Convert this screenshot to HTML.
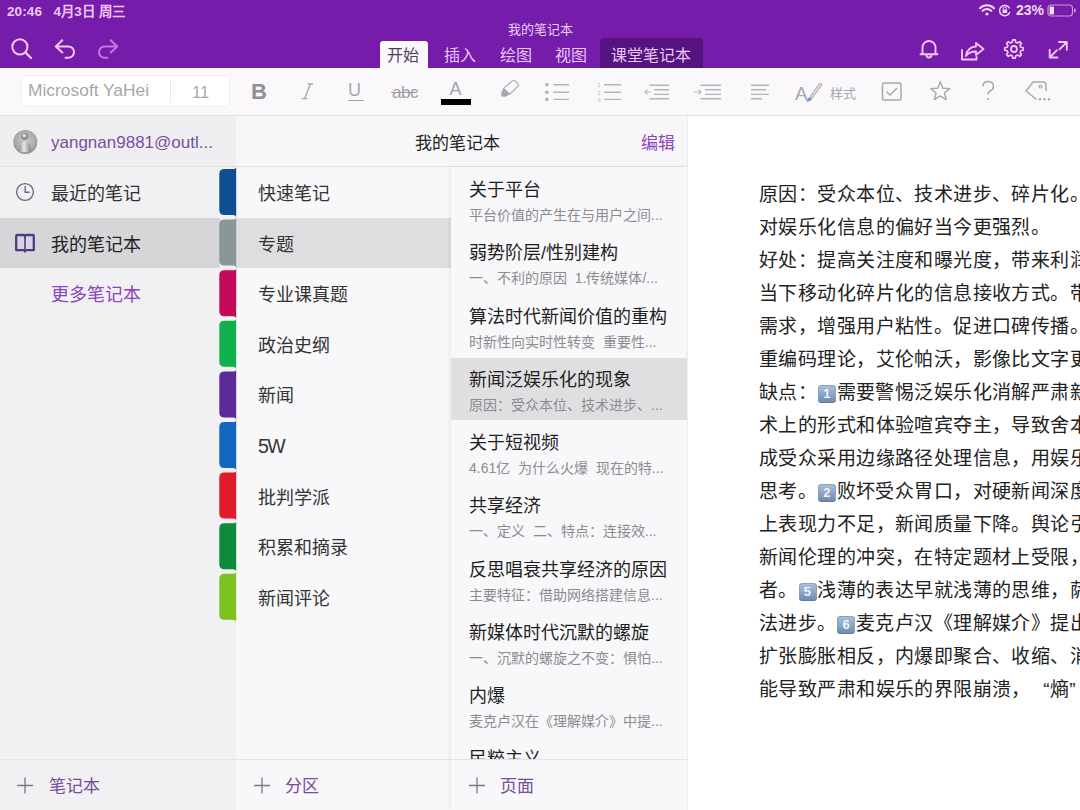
<!DOCTYPE html>
<html lang="zh-CN">
<head>
<meta charset="utf-8">
<style>
*{margin:0;padding:0;box-sizing:border-box}
html,body{width:1080px;height:810px;overflow:hidden;background:#fff}
body{position:relative;font-family:"Liberation Sans",sans-serif;color:#222}
.a{position:absolute;white-space:nowrap}
#top{position:absolute;left:0;top:0;width:1080px;height:68px;background:#761CAB}
#tb{position:absolute;left:0;top:68px;width:1080px;height:48px;background:#FAF8FB;border-bottom:1px solid #E2E0E4}
#nb{position:absolute;left:0;top:116px;width:236px;height:694px;background:#F1F0F3}
#sec{position:absolute;left:236px;top:116px;width:215px;height:694px;background:#F8F7FA}
#pg{position:absolute;left:451px;top:167px;width:236px;height:643px;background:#F8F7FA;box-shadow:-2px 0 4px rgba(0,0,0,0.06)}
#content{position:absolute;left:687px;top:116px;width:393px;height:694px;background:#fff;overflow:hidden;border-left:1px solid #EDECEF}
.hdr{position:absolute;top:116px;height:51px;border-bottom:1px solid #E4E3E6}
.ln{font-size:19px;letter-spacing:0.42px;color:#222;line-height:24px}
.kc{display:inline-block;width:18px;height:18px;vertical-align:1px;border-radius:4px;background:linear-gradient(#AFC3DA,#6A89AD);box-shadow:inset 0 -1px 0 #5D7C9F, inset 0 0 0 1px #87A2C2;color:#EEF4FA;font-size:13px;font-weight:bold;text-align:center;line-height:18px;margin:0 0.7px}
.q1{display:inline-block;width:1em;text-align:right}.q2{display:inline-block;width:1em;text-align:left}
</style>
</head>
<body>

<div id="top">
 <div class="a" style="left:7px;top:-0.5px;font-size:13.5px;font-weight:bold;color:#EEC8F5;letter-spacing:0.1px">20:46&nbsp;&nbsp;&nbsp;4月3日 周三</div>
 <svg class="a" style="left:978px;top:3px" width="18" height="13" viewBox="0 0 18 13"><path d="M2 5.2 A10 10 0 0 1 16 5.2" fill="none" stroke="#F2D6F6" stroke-width="2" stroke-linecap="round"/><path d="M4.6 7.9 A6.2 6.2 0 0 1 13.4 7.9" fill="none" stroke="#F2D6F6" stroke-width="2" stroke-linecap="round"/><circle cx="9" cy="11" r="1.6" fill="#F2D6F6"/></svg>
 <svg class="a" style="left:998px;top:4px" width="14" height="13" viewBox="0 0 14 13"><path d="M11.8 8 A5.2 5.2 0 1 1 11.6 4.6" fill="none" stroke="#F2D6F6" stroke-width="1.4"/><rect x="4.5" y="5.5" width="4.6" height="3.6" fill="#F2D6F6"/><path d="M5.3 5.6 V4.3 A1.5 1.5 0 0 1 8.3 4.3 V5.6" fill="none" stroke="#F2D6F6" stroke-width="1"/></svg>
 <div class="a" style="left:1016px;top:2px;font-size:14px;font-weight:bold;color:#F2D6F6">23%</div>
 <svg class="a" style="left:1047px;top:4px" width="30" height="13" viewBox="0 0 30 13"><rect x="1" y="1" width="24.5" height="11" rx="3" fill="none" stroke="#C79ADB" stroke-width="1.2"/><rect x="2.6" y="2.6" width="4.4" height="7.8" rx="1" fill="#F4E2F7"/><path d="M27 4.5 A2 2 0 0 1 27 8.5" fill="#C79ADB"/></svg>
 <div class="a" style="left:0;width:1080px;text-align:center;top:19px;font-size:13px;color:#EBCFF2">我的笔记本</div>
 <!-- left icons -->
 <svg class="a" style="left:8px;top:34px" width="28" height="28" viewBox="8 34 28 28"><circle cx="19.9" cy="46.8" r="7.6" fill="none" stroke="#F2C8F5" stroke-width="2"/><path d="M25.6 52.6 L31 58" stroke="#F2C8F5" stroke-width="2.2" stroke-linecap="round"/></svg>
 <svg class="a" style="left:50px;top:34px" width="30" height="28" viewBox="50 34 30 28"><path d="M62.3 40.3 L55.8 46.4 L62.3 52.5 M55.8 46.4 H68.3 A5.7 5.7 0 0 1 68.3 57.8 H65.5" fill="none" stroke="#F2C8F5" stroke-width="2" stroke-linecap="round" stroke-linejoin="round"/></svg>
 <svg class="a" style="left:92px;top:34px" width="30" height="28" viewBox="92 34 30 28"><path d="M110.7 40.3 L117.2 46.4 L110.7 52.5 M117.2 46.4 H104.7 A5.7 5.7 0 0 0 104.7 57.8 H107.5" fill="none" stroke="#C07ADB" stroke-width="2" stroke-linecap="round" stroke-linejoin="round"/></svg>
 <!-- tabs -->
 <div class="a" style="left:380px;top:41px;width:48px;height:27px;background:#FAF8FB;border-radius:3px 3px 0 0"></div>
 <div class="a" style="left:387px;top:41.5px;font-size:16px;color:#4F3D5E">开始</div>
 <div class="a" style="left:444px;top:41.5px;font-size:16px;color:#E9C6F4">插入</div>
 <div class="a" style="left:500px;top:41.5px;font-size:16px;color:#E9C6F4">绘图</div>
 <div class="a" style="left:555px;top:41.5px;font-size:16px;color:#E9C6F4">视图</div>
 <div class="a" style="left:600px;top:38px;width:103px;height:30px;background:#55137F;border-radius:4px 4px 0 0"></div>
 <div class="a" style="left:611px;top:41.5px;font-size:16px;color:#E9C6F4">课堂笔记本</div>
 <!-- right icons -->
 <svg class="a" style="left:914px;top:36px" width="30" height="26" viewBox="914 36 30 26"><path d="M922.5 54 V47.5 A6.5 6.5 0 0 1 935.5 47.5 V54 M920.5 54.2 H937.5 M926.5 55 A2.5 2.5 0 0 0 931.5 55" fill="none" stroke="#F2C8F5" stroke-width="1.9" stroke-linecap="round" stroke-linejoin="round"/></svg>
 <svg class="a" style="left:956px;top:36px" width="32" height="28" viewBox="956 36 32 28"><path d="M962 50 V59.5 H976.5 V57" fill="none" stroke="#F2C8F5" stroke-width="1.9" stroke-linecap="round" stroke-linejoin="round"/><path d="M966 56 C966.5 50 971 46.5 976 46.5 V43 L983.5 49 L976 55 V51.5 C971.5 51.5 968 53 966 56 Z" fill="none" stroke="#F2C8F5" stroke-width="1.8" stroke-linejoin="round"/></svg>
 <svg class="a" style="left:1002px;top:37px" width="24" height="24" viewBox="1002 37 24 24"><path d="M1023.22 47.76 L1023.22 50.24 L1020.77 50.79 L1020.05 52.52 L1021.39 54.64 L1019.64 56.39 L1017.52 55.05 L1015.79 55.77 L1015.24 58.22 L1012.76 58.22 L1012.21 55.77 L1010.48 55.05 L1008.36 56.39 L1006.61 54.64 L1007.95 52.52 L1007.23 50.79 L1004.78 50.24 L1004.78 47.76 L1007.23 47.21 L1007.95 45.48 L1006.61 43.36 L1008.36 41.61 L1010.48 42.95 L1012.21 42.23 L1012.76 39.78 L1015.24 39.78 L1015.79 42.23 L1017.52 42.95 L1019.64 41.61 L1021.39 43.36 L1020.05 45.48 L1020.77 47.21 Z" fill="none" stroke="#F2C8F5" stroke-width="1.7" stroke-linejoin="round"/><circle cx="1014" cy="49" r="3" fill="none" stroke="#F2C8F5" stroke-width="1.8"/></svg>
 <svg class="a" style="left:1044px;top:36px" width="28" height="26" viewBox="1044 36 28 26"><path d="M1059 42 H1066.8 V49.8 M1066.5 42.3 L1059.5 49.3 M1057.5 57.5 H1049.7 V49.7 M1050 57.2 L1057 50.2" fill="none" stroke="#F2C8F5" stroke-width="1.9" stroke-linecap="round" stroke-linejoin="round"/></svg>
</div>


<div id="tb">
 <div class="a" style="left:21px;top:7px;width:209px;height:32px;background:#fff;border:1px solid #EEEDF0;border-radius:5px"></div>
 <div class="a" style="left:170px;top:12px;width:1px;height:23px;background:#E9E8EB"></div>
 <div class="a" style="left:28px;top:12px;font-size:17.4px;color:#A8A6AA;letter-spacing:0px">Microsoft YaHei</div>
 <div class="a" style="left:192px;top:14.5px;font-size:16.5px;color:#A8A6AA">11</div>
 <div class="a" style="left:251px;top:11px;font-size:22px;font-weight:bold;color:#918F93">B</div>
 <svg class="a" style="left:298px;top:12px" width="20" height="24" viewBox="298 80 20 24"><path d="M310.6 83.8 L304.6 98.6 M307.6 83.8 H313 M301.8 98.6 H307.4" fill="none" stroke="#A3A1A5" stroke-width="1.3"/></svg>
 <div class="a" style="left:348px;top:11.5px;font-size:18px;color:#A8A6AA">U</div>
 <div class="a" style="left:348px;top:31.5px;width:16px;height:1.3px;background:#A8A6AA"></div>
 <div class="a" style="left:392px;top:14.5px;font-size:17px;color:#A09EA2;letter-spacing:-0.5px">abc</div>
 <div class="a" style="left:391px;top:24px;width:26px;height:1.3px;background:#A09EA2"></div>
 <div class="a" style="left:449.5px;top:11px;font-size:18px;color:#A3A1A5">A</div>
 <div class="a" style="left:441px;top:31px;width:30px;height:6px;background:#000"></div>
 <svg class="a" style="left:498px;top:10px" width="24" height="22" viewBox="498 78 24 22"><path d="M503.5 88.5 L512.5 80.8 Q514 79.8 515.2 81 L518 83.8 Q519 85 518 86.3 L509.8 94.2 Z" fill="none" stroke="#B5B3B7" stroke-width="1.3" stroke-linejoin="round"/><path d="M503.5 88.5 L509.8 94.2 L505.5 96.8 L501.5 96.5 L501.2 92.5 Z" fill="#A9A7AB"/></svg>
 <!-- bullets -->
 <svg class="a" style="left:540px;top:78px;" width="0" height="0"></svg>
 <svg class="a" style="left:0;top:0" width="1080" height="48" viewBox="0 68 1080 48">
  <g fill="#B3B1B5"><circle cx="546.8" cy="84.7" r="1.8"/><circle cx="546.8" cy="92.2" r="1.8"/><circle cx="546.8" cy="99.4" r="1.8"/></g>
  <g stroke="#B5B3B7" stroke-width="1.4"><path d="M553.5 84.7 H569 M553.5 92.2 H569 M553.5 99.4 H569"/>
  <path d="M604 84.7 H621 M604 92.2 H621 M604 99.4 H621"/>
  <path d="M649.5 85.2 H669 M654 89.7 H669 M654 94.4 H669 M649.5 98.8 H669"/>
  <path d="M700.5 85.2 H721 M705 89.7 H721 M705 94.4 H721 M700.5 98.8 H721"/>
  <path d="M751 85.2 H769 M751 89.7 H766 M751 94.4 H769 M751 98.8 H762"/>
  </g>
  <g fill="#B9B7BB" font-size="5.5" font-family="Liberation Sans"><text x="597.5" y="87">1</text><text x="597.5" y="94.5">2</text><text x="597.5" y="101.5">3</text></g>
  <path d="M651 92 H645 M647.5 89.5 L645 92 L647.5 94.5" fill="none" stroke="#BDBBBF" stroke-width="1.2"/>
  <path d="M694 92 H701 M698.5 89.5 L701 92 L698.5 94.5" fill="none" stroke="#BDBBBF" stroke-width="1.2"/>
  <text x="795" y="100" font-size="19" font-family="Liberation Sans" fill="#A9A7AB">A</text>
  <path d="M808 100 L819 84.5 Q821.5 82.5 821.8 84.5 L811.5 98.5 Z" fill="none" stroke="#A9A7AB" stroke-width="1.2"/>
  <path d="M806.5 101.5 Q808 97 810.5 97.5 L812 99 Q810 102 806.5 101.5 Z" fill="#6E9BD0"/>
  <rect x="882.5" y="83" width="18.5" height="17" rx="1.5" fill="none" stroke="#A9A7AB" stroke-width="1.5"/>
  <path d="M886.5 91.5 L890 95 L897 88" fill="none" stroke="#A9A7AB" stroke-width="1.5"/>
  <path d="M940.3 81.8 L942.9 88.2 L949.7 88.6 L944.5 93 L946.2 99.6 L940.3 95.9 L934.4 99.6 L936.1 93 L930.9 88.6 L937.7 88.2 Z" fill="none" stroke="#A9A7AB" stroke-width="1.4" stroke-linejoin="round"/>
  <path d="M983 86.5 Q983 81.5 988 81.5 Q993.5 81.5 993.5 86.5 Q993.5 89.5 990 91 Q988 92 988 94.5" fill="none" stroke="#A9A7AB" stroke-width="1.5"/>
  <circle cx="988" cy="99" r="1.1" fill="#A9A7AB"/>
  <path d="M1036.5 99.5 L1026 91 L1033 82 H1043 Q1046 82 1046 85 V91" fill="none" stroke="#A9A7AB" stroke-width="1.5" stroke-linejoin="round"/>
  <circle cx="1040.5" cy="86.5" r="1.5" fill="none" stroke="#A9A7AB" stroke-width="1.2"/>
  <g fill="#A9A7AB"><circle cx="1040" cy="99.3" r="1.2"/><circle cx="1044.5" cy="99.3" r="1.2"/><circle cx="1049" cy="99.3" r="1.2"/></g>
 </svg>
 <div class="a" style="left:830px;top:15px;font-size:13px;color:#A9A7AB">样式</div>
</div>


<div id="nb">
 <div class="a" style="left:0;top:0;width:236px;height:51px;background:#EFEEF1;border-bottom:1px solid #E2E1E4"></div>
 <svg class="a" style="left:12px;top:13px" width="27" height="27" viewBox="12 129 27 27"><defs><radialGradient id="av" cx="0.5" cy="0.45" r="0.55"><stop offset="0" stop-color="#C9CBCC"/><stop offset="0.7" stop-color="#ABADAE"/><stop offset="1" stop-color="#8F9192"/></radialGradient><linearGradient id="bd" x1="0" x2="1"><stop offset="0" stop-color="#8C8F90"/><stop offset="0.45" stop-color="#E6EAEB"/><stop offset="1" stop-color="#7E8182"/></linearGradient></defs><circle cx="25.3" cy="142" r="12" fill="url(#av)"/><circle cx="24.8" cy="136.5" r="3.6" fill="#8F9293"/><circle cx="24.2" cy="135.6" r="1.6" fill="#E8EAEA"/><path d="M18.5 152 Q18.5 142 24.8 141.5 Q31 142 31 152 Z" fill="url(#bd)"/></svg>
 <div class="a" style="left:51px;top:17px;font-size:17px;color:#7A4E9E">yangnan9881@outl...</div>
 <div class="a" style="left:0;top:102px;width:220px;height:50px;background:#D6D5D8"></div>
 <svg class="a" style="left:14px;top:66px" width="24" height="24" viewBox="14 182 24 24"><circle cx="25" cy="192" r="8.4" fill="none" stroke="#75608A" stroke-width="1.35"/><path d="M25.2 186 V192.2 H29.6" fill="none" stroke="#75608A" stroke-width="1.4"/></svg>
 <svg class="a" style="left:12px;top:114px" width="26" height="24" viewBox="12 230 26 24"><path d="M16.2 236 Q16.2 235 17.5 235 H23.5 Q25 235 25 236.5 Q25 235 26.5 235 H32.5 Q33.8 235 33.8 236 V250.2 H26.5 Q25 250.2 25 251.5 Q25 250.2 23.5 250.2 H16.2 Z" fill="#DAD3E6" stroke="#4E3D7C" stroke-width="2.3" stroke-linejoin="round"/><path d="M25 236.5 V251" stroke="#4E3D7C" stroke-width="1.6"/></svg>
 <div class="a" style="left:51px;top:62.7px;font-size:18px;color:#333">最近的笔记</div>
 <div class="a" style="left:51px;top:113.7px;font-size:18px;color:#222">我的笔记本</div>
 <div class="a" style="left:51px;top:163.7px;font-size:18px;color:#8E44C0">更多笔记本</div>
 <div class="a" style="left:0;top:643px;width:236px;height:51px;background:#F1F0F3;border-top:1px solid #E4E3E6"></div>
 <svg class="a" style="left:16px;top:660px" width="18" height="18" viewBox="0 0 18 18"><path d="M1 9.5 H17 M9 1.5 V17.5" stroke="#807389" stroke-width="1.3"/></svg>
 <div class="a" style="left:49px;top:655.5px;font-size:17px;color:#7B4A9A">笔记本</div>
</div>

<div id="sec">
 <div class="a" style="left:0;top:0;width:451px;height:51px;background:#F7F6F9;border-bottom:1px solid #E4E3E6"></div>
 <div class="a" style="left:179px;top:12.5px;font-size:17px;color:#222">我的笔记本</div>
 <div class="a" style="left:405px;top:12.5px;font-size:17px;color:#8E44C0">编辑</div>
 <div class="a" style="left:0;top:102px;width:215px;height:50px;background:#DEDDE0"></div>
 <div class="a" style="left:22px;top:63.0px;font-size:18px;color:#333">快速笔记</div>
 <div class="a" style="left:22px;top:113.6px;font-size:18px;color:#333">专题</div>
 <div class="a" style="left:22px;top:164.2px;font-size:18px;color:#333">专业课真题</div>
 <div class="a" style="left:22px;top:214.8px;font-size:18px;color:#333">政治史纲</div>
 <div class="a" style="left:22px;top:265.4px;font-size:18px;color:#333">新闻</div>
 <div class="a" style="left:22px;top:318.5px;font-size:19.5px;letter-spacing:-1.5px;color:#333">5W</div>
 <div class="a" style="left:22px;top:366.6px;font-size:18px;color:#333">批判学派</div>
 <div class="a" style="left:22px;top:417.2px;font-size:18px;color:#333">积累和摘录</div>
 <div class="a" style="left:22px;top:467.8px;font-size:18px;color:#333">新闻评论</div>
 <div class="a" style="left:0;top:643px;width:215px;height:51px;background:#F8F7FA;border-top:1px solid #E4E3E6"></div>
 <svg class="a" style="left:17px;top:660px" width="18" height="18" viewBox="0 0 18 18"><path d="M1 9.5 H17 M9 1.5 V17.5" stroke="#807389" stroke-width="1.3"/></svg>
 <div class="a" style="left:49px;top:655.5px;font-size:17px;color:#7B4A9A">分区</div>
</div>
<svg class="a" style="left:210px;top:160px" width="30" height="470" viewBox="210 160 30 470"><path d="M236.2 167.0 Q236 169.0 233 169.0 H224.5 Q219.3 169.0 219.3 174.0 V210.0 Q219.3 215.0 224.5 215.0 H233 Q236 215.0 236.2 217.5 Z" fill="#0F4E92"/><path d="M236.2 217.6 Q236 219.6 233 219.6 H224.5 Q219.3 219.6 219.3 224.6 V260.6 Q219.3 265.6 224.5 265.6 H233 Q236 265.6 236.2 268.1 Z" fill="#8A9799"/><path d="M236.2 268.2 Q236 270.2 233 270.2 H224.5 Q219.3 270.2 219.3 275.2 V311.2 Q219.3 316.2 224.5 316.2 H233 Q236 316.2 236.2 318.7 Z" fill="#C2095A"/><path d="M236.2 318.8 Q236 320.8 233 320.8 H224.5 Q219.3 320.8 219.3 325.8 V361.8 Q219.3 366.8 224.5 366.8 H233 Q236 366.8 236.2 369.3 Z" fill="#10B14D"/><path d="M236.2 369.4 Q236 371.4 233 371.4 H224.5 Q219.3 371.4 219.3 376.4 V412.4 Q219.3 417.4 224.5 417.4 H233 Q236 417.4 236.2 419.9 Z" fill="#5B2A99"/><path d="M236.2 420.0 Q236 422.0 233 422.0 H224.5 Q219.3 422.0 219.3 427.0 V463.0 Q219.3 468.0 224.5 468.0 H233 Q236 468.0 236.2 470.5 Z" fill="#1266BD"/><path d="M236.2 470.6 Q236 472.6 233 472.6 H224.5 Q219.3 472.6 219.3 477.6 V513.6 Q219.3 518.6 224.5 518.6 H233 Q236 518.6 236.2 521.1 Z" fill="#E01B2C"/><path d="M236.2 521.2 Q236 523.2 233 523.2 H224.5 Q219.3 523.2 219.3 528.2 V564.2 Q219.3 569.2 224.5 569.2 H233 Q236 569.2 236.2 571.7 Z" fill="#0E8A3C"/><path d="M236.2 571.8 Q236 573.8 233 573.8 H224.5 Q219.3 573.8 219.3 578.8 V614.8 Q219.3 619.8 224.5 619.8 H233 Q236 619.8 236.2 622.3 Z" fill="#7DC21E"/></svg>

<div id="pg">
 <div class="a" style="left:0;top:190.75px;width:236px;height:62.5px;background:#DFDFE2"></div>
 <div class="a" style="left:18px;top:8.00px;font-size:18px;color:#1F1F1F">关于平台</div>
 <div class="a" style="left:18px;top:37.00px;font-size:14px;color:#8D8B90">平台价值的产生在与用户之间...</div>
 <div class="a" style="left:18px;top:71.25px;font-size:18px;color:#1F1F1F">弱势阶层/性别建构</div>
 <div class="a" style="left:18px;top:100.25px;font-size:14px;color:#8D8B90">一、不利的原因&nbsp;&nbsp;1.传统媒体/...</div>
 <div class="a" style="left:18px;top:134.50px;font-size:18px;color:#1F1F1F">算法时代新闻价值的重构</div>
 <div class="a" style="left:18px;top:163.50px;font-size:14px;color:#8D8B90">时新性向实时性转变&nbsp;&nbsp;重要性...</div>
 <div class="a" style="left:18px;top:197.75px;font-size:18px;color:#1F1F1F">新闻泛娱乐化的现象</div>
 <div class="a" style="left:18px;top:226.75px;font-size:14px;color:#8D8B90">原因：受众本位、技术进步、...</div>
 <div class="a" style="left:18px;top:261.00px;font-size:18px;color:#1F1F1F">关于短视频</div>
 <div class="a" style="left:18px;top:290.00px;font-size:14px;color:#8D8B90">4.61亿&nbsp;&nbsp;为什么火爆&nbsp;&nbsp;现在的特...</div>
 <div class="a" style="left:18px;top:324.25px;font-size:18px;color:#1F1F1F">共享经济</div>
 <div class="a" style="left:18px;top:353.25px;font-size:14px;color:#8D8B90">一、定义&nbsp;&nbsp;二、特点：连接效...</div>
 <div class="a" style="left:18px;top:387.50px;font-size:18px;color:#1F1F1F">反思唱衰共享经济的原因</div>
 <div class="a" style="left:18px;top:416.50px;font-size:14px;color:#8D8B90">主要特征：借助网络搭建信息...</div>
 <div class="a" style="left:18px;top:450.75px;font-size:18px;color:#1F1F1F">新媒体时代沉默的螺旋</div>
 <div class="a" style="left:18px;top:479.75px;font-size:14px;color:#8D8B90">一、沉默的螺旋之不变：惧怕...</div>
 <div class="a" style="left:18px;top:514.00px;font-size:18px;color:#1F1F1F">内爆</div>
 <div class="a" style="left:18px;top:543.00px;font-size:14px;color:#8D8B90">麦克卢汉在《理解媒介》中提...</div>
 <div class="a" style="left:18px;top:577.25px;font-size:18px;color:#1F1F1F">民粹主义</div>
 <div class="a" style="left:0;top:592px;width:236px;height:51px;background:#F8F7FA;border-top:1px solid #E4E3E6"></div>
 <svg class="a" style="left:17px;top:609px" width="18" height="18" viewBox="0 0 18 18"><path d="M1 9.5 H17 M9 1.5 V17.5" stroke="#807389" stroke-width="1.3"/></svg>
 <div class="a" style="left:49px;top:604.5px;font-size:17px;color:#7B4A9A">页面</div>
</div>

<div id="content">
 <div class="a ln" style="left:71px;top:66.5px">原因：受众本位、技术进步、碎片化。受众</div>
 <div class="a ln" style="left:71px;top:99.5px">对娱乐化信息的偏好当今更强烈。</div>
 <div class="a ln" style="left:71px;top:132.5px">好处：提高关注度和曝光度，带来利润。适应</div>
 <div class="a ln" style="left:71px;top:165.5px">当下移动化碎片化的信息接收方式。带来</div>
 <div class="a ln" style="left:71px;top:198.5px">需求，增强用户粘性。促进口碑传播。</div>
 <div class="a ln" style="left:71px;top:231.5px">重编码理论，艾伦帕沃，影像比文字更</div>
 <div class="a ln" style="left:71px;top:264.5px">缺点：<span class="kc">1</span>需要警惕泛娱乐化消解严肃新闻</div>
 <div class="a ln" style="left:71px;top:297.5px">术上的形式和体验喧宾夺主，导致舍本</div>
 <div class="a ln" style="left:71px;top:330.5px">成受众采用边缘路径处理信息，用娱乐</div>
 <div class="a ln" style="left:71px;top:363.5px">思考。<span class="kc">2</span>败坏受众胃口，对硬新闻深度</div>
 <div class="a ln" style="left:71px;top:396.5px">上表现力不足，新闻质量下降。舆论引</div>
 <div class="a ln" style="left:71px;top:429.5px">新闻伦理的冲突，在特定题材上受限，</div>
 <div class="a ln" style="left:71px;top:462.5px">者。<span class="kc">5</span>浅薄的表达早就浅薄的思维，萨</div>
 <div class="a ln" style="left:71px;top:495.5px">法进步。<span class="kc">6</span>麦克卢汉《理解媒介》提出</div>
 <div class="a ln" style="left:71px;top:528.5px">扩张膨胀相反，内爆即聚合、收缩、消</div>
 <div class="a ln" style="left:71px;top:561.5px">能导致严肃和娱乐的界限崩溃，<span class="q1">“</span>熵<span class="q2">”</span></div>
</div>

</body>
</html>
